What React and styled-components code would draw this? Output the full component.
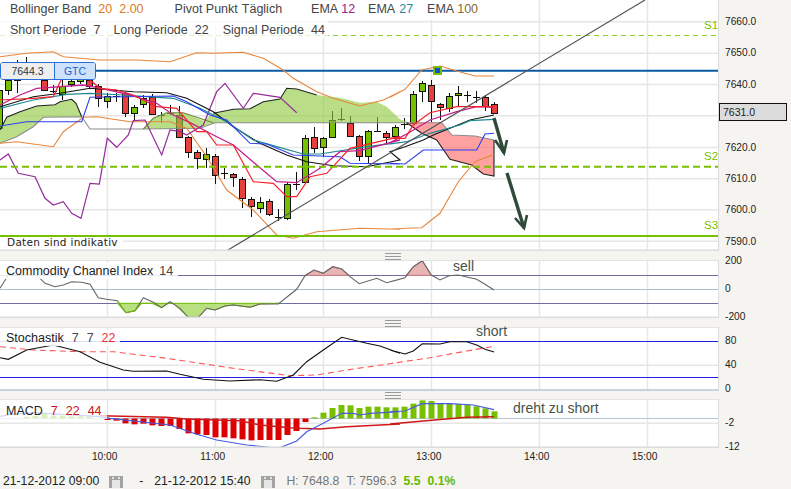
import React from "react";
import styled, { createGlobalStyle } from "styled-components";

const GlobalStyle = createGlobalStyle`
  html, body {
    margin: 0;
    padding: 0;
    background: #f5f4f0;
    overflow: hidden;
  }
`;

// zoom-read points are 3x, a pane keeps page coordinates in its viewBox
const pts = (list, ox = 0, oy = 0) =>
  list.map(([x, y]) => `${(ox + x / 3).toFixed(1)},${(oy + y / 3).toFixed(1)}`).join(" ");

const candleX = (i) => -0.5 + 9 * i;
const UP = "#76c000";
const DOWN = "#e8403a";

// i, colour, body top, body bottom, wick top, wick bottom
const candles = [
  [0, UP, 90, 128, 85, 132], [1, UP, 80, 90, 70, 95], [2, UP, 80, 80, 60, 93], [3, UP, 70, 70, 57, 75],
  [5, DOWN, 80, 90, 75, 91], [6, "#111", 91, 91, 85, 93], [7, UP, 86, 94, 80, 100], [8, UP, 81, 84, 80, 87],
  [9, UP, 79, 81, 75, 84], [10, DOWN, 80, 86, 75, 88], [11, DOWN, 86, 98, 84, 107], [12, UP, 96, 101, 93, 108],
  [13, "#111", 96, 96, 93, 102], [14, DOWN, 93, 113, 92, 117], [15, UP, 107, 113, 105, 120], [16, UP, 98, 104, 95, 108],
  [17, DOWN, 97, 114, 94, 115], [18, "#111", 115, 115, 112, 123], [19, "#111", 113, 113, 105, 115], [20, DOWN, 115, 137, 106, 138],
  [21, DOWN, 137, 152, 136, 158], [22, DOWN, 152, 158, 150, 169], [23, UP, 154, 159, 148, 168], [24, DOWN, 156, 175, 154, 184],
  [25, "#111", 173, 173, 168, 179], [26, DOWN, 174, 177, 173, 187], [27, DOWN, 179, 198, 177, 208], [28, DOWN, 199, 206, 197, 217],
  [29, UP, 202, 208, 197, 213], [30, DOWN, 201, 214, 199, 216], [31, "#111", 217, 217, 209, 221], [32, UP, 184, 218, 182, 220],
  [33, "#111", 184, 184, 172, 190], [34, UP, 138, 182, 135, 182], [35, DOWN, 137, 148, 127, 153], [36, UP, 138, 147, 137, 157],
  [37, UP, 120, 137, 111, 138], [38, "#111", 119, 119, 108, 121], [39, DOWN, 123, 136, 116, 137], [40, DOWN, 136, 156, 135, 161],
  [41, UP, 131, 156, 130, 163], [42, "#111", 131, 131, 117, 132], [43, DOWN, 133, 137, 131, 144], [44, UP, 127, 136, 125, 137],
  [45, "#111", 124, 124, 118, 129], [46, UP, 94, 123, 91, 123], [47, UP, 83, 91, 81, 102], [48, DOWN, 85, 101, 80, 122],
  [49, DOWN, 104, 107, 103, 120], [50, UP, 96, 108, 93, 112], [51, UP, 93, 95, 86, 107], [52, "#111", 95, 95, 91, 102],
  [53, "#111", 97, 97, 91, 103], [54, DOWN, 97, 106, 95, 111], [55, DOWN, 104, 113, 102, 114],
];

const priceLines = [
  { color: "#e8863a", width: 1.1, d: pts([[0, 170], [80, 160], [160, 155], [190, 170], [300, 180], [410, 180], [510, 185], [590, 158], [640, 160], [730, 157], [790, 175], [850, 210], [880, 235], [950, 275], [1000, 295], [1080, 318], [1150, 300], [1200, 275]]) + " " + pts([[0, 292], [45, 268], [95, 210], [150, 198], [200, 213], [255, 228], [312, 228]], 390) },
  { color: "#e8863a", width: 1.1, d: pts([[0, 430], [50, 425], [160, 440], [190, 395], [250, 352], [290, 350], [390, 365], [510, 365], [560, 385], [620, 470], [680, 570], [760, 630], [830, 705], [880, 715], [950, 695], [1080, 685], [1200, 688]]) + " " + pts([[0, 688], [50, 685], [95, 683], [150, 640], [205, 545], [255, 485], [312, 463]], 390) },
  { color: "#942c9a", width: 1.2, d: pts([[0, 480], [25, 462], [55, 520], [105, 530], [135, 595], [160, 615], [190, 605], [215, 640], [243, 655], [270, 550], [298, 552], [322, 415], [350, 442], [385, 405], [400, 362], [435, 360], [485, 465], [510, 390], [540, 395], [560, 405], [610, 375], [650, 275], [675, 250], [730, 325], [760, 280], [840, 292], [890, 338]]) },
  { color: "#111", width: 1.1, d: pts([[0, 320], [100, 290], [180, 280], [270, 265], [400, 275], [500, 278], [560, 295], [640, 335], [700, 380], [780, 430], [860, 465], [920, 485], [1000, 497], [1100, 500], [1200, 480]]) + " " + pts([[0, 455], [45, 440], [100, 420], [130, 405], [180, 385], [240, 360], [312, 345]], 390) },
  { color: "#1f8a96", width: 1.2, d: pts([[0, 325], [100, 300], [200, 283], [270, 280], [370, 285], [440, 290], [520, 295], [600, 325], [680, 365], [760, 420], [830, 440], [910, 462], [960, 462], [1100, 440], [1200, 428]]) + " " + pts([[0, 432], [50, 425], [120, 400], [210, 375], [240, 362], [312, 358]], 390) },
  { color: "#2a3ff0", width: 1.1, d: pts([[0, 378], [80, 365], [245, 365], [270, 292], [520, 288], [560, 305], [630, 345], [680, 360], [750, 430], [800, 432], [880, 465], [1020, 470], [1050, 490], [1200, 492]]) + " " + pts([[0, 490], [45, 492], [100, 450], [260, 450], [285, 402], [312, 400]], 390) },
  { color: "#c2208f", width: 1.3, d: pts([[0, 315], [60, 285], [110, 265], [250, 255], [290, 262], [380, 282], [470, 310], [520, 345], [570, 368], [640, 405], [700, 435], [770, 495], [830, 545], [890, 548], [960, 505], [1020, 455], [1080, 452], [1200, 420]]) + " " + pts([[0, 428], [50, 402], [120, 360], [200, 335], [260, 320], [312, 322]], 390) },
  { color: "#f5202a", width: 1.2, d: pts([[0, 300], [100, 295], [160, 290], [190, 225], [270, 240], [300, 265], [350, 270], [400, 285], [470, 320], [530, 325], [590, 395], [620, 395], [650, 435], [700, 435], [760, 545], [820, 550], [860, 590], [890, 590], [930, 530], [980, 520], [1050, 445], [1200, 410]]) + " " + pts([[0, 415], [45, 415], [70, 375], [120, 338], [200, 320], [312, 320]], 390) },
];

const greenCloudLeft = [[0, 390], [20, 352], [60, 335], [110, 318], [165, 314], [180, 305], [215, 298], [228, 310], [245, 350], [130, 352], [100, 380], [50, 410], [0, 430]];
const greenCloudRight = [[430, 387], [460, 355], [500, 338], [550, 338], [610, 362], [640, 340], [700, 328], [750, 326], [790, 305], [840, 297], [860, 265], [890, 267], [950, 285], [1020, 293], [1080, 308], [1130, 305], [1160, 320], [1200, 358], [1230, 368], [640, 368], [600, 385]];
const redCloud = [[50, 368], [155, 368], [185, 405], [255, 408], [312, 420], [312, 528], [280, 522], [245, 495], [180, 478], [140, 420], [95, 400]];

const cciCurve = pts([[0, 130], [25, 90], [110, 90], [135, 115], [165, 125], [190, 120], [215, 110], [245, 112], [270, 118], [295, 158], [320, 163], [352, 167], [378, 203], [405, 197], [430, 158], [460, 172], [485, 188], [510, 170], [540, 190], [565, 217], [595, 217], [620, 190], [645, 195], [675, 183], [700, 180], [750, 187], [780, 177], [835, 177], [890, 133], [915, 92], [942, 75], [970, 85], [998, 65], [1025, 72], [1050, 95], [1078, 116], [1130, 100], [1160, 113], [1200, 103]], 0, 245) + " " + pts([[0, 110], [45, 98], [70, 65], [97, 47], [124, 90], [150, 105], [178, 92], [205, 90], [260, 103], [285, 118], [312, 135]], 390, 245);
const cciGreen = pts([[352, 175], [378, 203], [405, 197], [425, 175]], 0, 245) + " " + pts([[455, 175], [485, 188], [505, 175], [520, 175], [565, 217], [595, 217], [620, 190], [645, 195], [675, 183], [700, 180], [750, 187], [780, 177], [838, 175]], 0, 245);
const cciRedA = pts([[915, 91], [942, 75], [970, 85], [998, 65], [1025, 72], [1048, 91]], 0, 245);
const cciRedB = pts([[48, 91], [70, 65], [97, 47], [124, 91]], 390, 245);

const stochLine = pts([[0, 338], [25, 343], [80, 315], [160, 300], [240, 320], [300, 352], [370, 375], [400, 379], [500, 378], [540, 388], [610, 403], [690, 408], [780, 404], [830, 409], [880, 390], [920, 350], [970, 315], [1025, 277], [1100, 295], [1140, 303], [1200, 325]], 0, 245) + " " + pts([[0, 315], [45, 327], [70, 318], [97, 296], [150, 297], [180, 290], [230, 290], [260, 300], [285, 313], [312, 321]], 390, 245);
const stochSignal = pts([[0, 305], [100, 315], [240, 320], [340, 320], [500, 340], [700, 370], [870, 392], [950, 390], [1060, 372], [1200, 352]], 0, 245) + " " + pts([[0, 356], [120, 338], [230, 318], [305, 305]], 390, 245);

const macdBars = [
  [3, 515], [4, 512], [5, 505], [6, 512], [7, 512], [8, 514], [9, 514], [10, 514],
  [12, 525], [13, 527], [14, 535], [15, 538], [16, 536], [17, 541], [18, 543], [19, 543], [20, 552], [21, 565], [22, 568], [23, 570], [24, 577], [25, 577], [26, 580], [27, 583], [28, 586], [29, 585], [30, 585], [31, 585], [32, 570], [33, 558], [34, 531],
  [35, 517], [36, 503], [37, 489], [38, 480], [39, 481], [40, 489], [41, 485], [42, 485], [43, 487], [44, 487], [45, 485], [46, 476], [47, 466], [48, 468], [49, 475], [50, 475], [51, 477], [52, 479], [53, 484], [54, 490], [55, 499],
];
const macdBlue = pts([[0, 515], [30, 508], [100, 503], [300, 515], [330, 520], [510, 540], [590, 568], [650, 585], [740, 600], [835, 610], [890, 588], [920, 560], [970, 535], [1025, 505], [1060, 505], [1080, 510], [1110, 505], [1200, 500]], 0, 245) + " " + pts([[0, 500], [45, 498], [97, 476], [180, 476], [250, 480], [312, 494]], 390, 245);
const macdRed = pts([[300, 512], [500, 517], [560, 522], [720, 527], [780, 540], [870, 548], [900, 550], [960, 552], [1040, 545], [1200, 537]], 0, 245) + " " + pts([[0, 537], [100, 528], [230, 517], [312, 515]], 390, 245);

const HOURS = [107.5, 215.5, 323.5, 431.5, 539.5, 647.5];

const Page = styled.div`
  width: 791px;
  height: 489px;
  display: flex;
  flex-direction: column;
  background: #f5f4f0;
  font-family: "Liberation Sans", Arial, sans-serif;
  overflow: hidden;
`;

const Pane = styled.section`
  display: flex;
  height: ${(p) => p.$height}px;
  flex: none;
`;

const Plot = styled.div`
  position: relative;
  width: 719px;
  flex: none;
  background: #fff;
  border-right: 1px solid #dcdcdc;
  box-sizing: border-box;
  box-shadow: 0 -1px 0 #e2e2e2;
  & > svg {
    display: block;
  }
`;

const Axis = styled.div`
  position: relative;
  flex: 1;
  display: flex;
  flex-direction: column;
  padding-left: 6px;
  & > div:first-child {
    margin-top: ${(p) => p.$top}px;
  }
`;

const Tick = styled.div`
  height: ${(p) => p.$step}px;
  line-height: ${(p) => p.$step}px;
  font-size: 10.2px;
  color: #222;
  flex: none;
`;

const PriceBadge = styled.div`
  position: absolute;
  left: 0;
  top: 103px;
  width: 68px;
  height: 18px;
  box-sizing: border-box;
  border: 1px solid #111;
  background: #dcdcdc;
  font-size: 10.5px;
  line-height: 17px;
  padding-left: 3px;
  color: #222;
`;

const Splitter = styled.div`
  height: ${(p) => p.$height}px;
  flex: none;
  width: 719px;
  display: flex;
  justify-content: center;
  align-items: flex-end;
  padding: 0 0 1px 66px;
  box-sizing: border-box;
`;

const Grip = styled.div`
  width: 16px;
  height: 5px;
  border-top: 1px solid #999;
  border-bottom: 1px solid #999;
  position: relative;
  &::after {
    content: "";
    position: absolute;
    left: 0;
    right: 0;
    top: 2px;
    height: 1px;
    background: #999;
  }
`;

const Legend = styled.div`
  position: absolute;
  left: 0;
  top: 0;
  display: flex;
  flex-direction: column;
  align-items: flex-start;
`;

const LegendRow = styled.div`
  display: flex;
  align-items: flex-end;
  height: ${(p) => p.$height}px;
  width: ${(p) => p.$width}px;
  box-sizing: border-box;
  padding: 0 0 ${(p) => p.$bottom}px 10px;
  background: rgba(255, 255, 255, ${(p) => p.$alpha});
  font-size: 12.5px;
  line-height: 15px;
  color: #444;
  white-space: nowrap;
`;

const Label = styled.span`
  margin-left: ${(p) => p.$gap || 0}px;
`;

const Value = styled.span`
  margin-left: ${(p) => p.$gap || 7}px;
  color: ${(p) => p.$color || "#444"};
`;

const PaneLegend = styled.div`
  position: absolute;
  left: 0;
  top: ${(p) => p.$top || 0}px;
  display: flex;
  align-items: center;
  height: 16px;
  padding: 0 5px 0 6px;
  background: rgba(255, 255, 255, ${(p) => p.$alpha || 0.85});
  font-size: 12.5px;
  color: #222;
  white-space: nowrap;
`;

const PriceTag = styled.div`
  position: absolute;
  left: 0;
  top: 62px;
  display: flex;
  width: 96px;
  height: 18px;
  box-sizing: border-box;
  border: 1px solid #2a6fd8;
  border-radius: 3px;
  overflow: hidden;
  font-size: 10.5px;
  line-height: 16px;
  text-align: center;
`;

const TagPrice = styled.span`
  width: 53px;
  background: #eeeeee;
  color: #333;
  border-right: 1px solid #2a6fd8;
`;

const TagKind = styled.span`
  flex: 1;
  background: #cfe2fb;
  color: #1a5fd0;
`;

const Disclaimer = styled.div`
  position: absolute;
  left: 0;
  bottom: 3px;
  height: 11px;
  padding: 0 5px 0 7px;
  background: #fff;
  font-family: "DejaVu Sans", Verdana, sans-serif;
  font-size: 10.5px;
  line-height: 10px;
  letter-spacing: 0.3px;
  color: #222;
`;

const Note = styled.div`
  position: absolute;
  left: ${(p) => p.$left}px;
  top: ${(p) => p.$top}px;
  font-size: 14px;
  line-height: 16px;
  color: #44544a;
`;

const LevelTag = styled.div`
  position: absolute;
  left: 704px;
  top: ${(p) => p.$top}px;
  font-size: 11.5px;
  line-height: 14px;
  color: #7ac100;
`;

const TimeAxis = styled.div`
  display: flex;
  flex: none;
  height: 20px;
  padding-left: 50.7px;
`;

const TimeLabel = styled.span`
  width: 108px;
  flex: none;
  text-align: center;
  font-size: 10.2px;
  line-height: 18px;
  color: #222;
`;

const Footer = styled.footer`
  display: flex;
  align-items: flex-end;
  flex: none;
  height: 20px;
  padding-left: 3px;
  font-size: 12.2px;
  line-height: 13px;
  color: #222;
  white-space: nowrap;
`;

const Stat = styled.span`
  margin-left: ${(p) => p.$gap || 0}px;
  color: ${(p) => p.$color || "#222"};
  font-weight: ${(p) => (p.$bold ? 700 : 400)};
`;

const CalendarSvg = styled.svg`
  flex: none;
  display: block;
  margin-left: 10px;
`;

const CalendarIcon = () => (
  <CalendarSvg width="14" height="12" viewBox="0 0 14 12">
    <rect width="14" height="12" fill="#a2a2a2" />
    <rect x="3" y="4" width="8" height="8" fill="#e6e6e6" />
    <rect x="3" y="1" width="2" height="2" fill="#e6e6e6" />
    <rect x="9" y="1" width="2" height="2" fill="#e6e6e6" />
  </CalendarSvg>
);

const Grid = ({ rows, top, bottom }) => (
  <g stroke="#e6e6e6" strokeWidth="1.4" fill="none">
    {HOURS.map((x) => (
      <line key={x} x1={x} x2={x} y1={top} y2={bottom} />
    ))}
    {rows.map((y) => (
      <line key={y} x1={0} x2={719} y1={y} y2={y} />
    ))}
  </g>
);

const MainChart = () => (
  <svg width="718" height="251" viewBox="0 0 718 251">
    <Grid rows={[21.7, 53.3, 84.5, 115.7, 147.5, 178.7, 209.7, 241.3]} top={0} bottom={250} />
    <line x1="95" x2="719" y1="70.7" y2="70.7" stroke="#0a5aa5" strokeWidth="2" />
    {candles.map(([i, color, top, bottom, wickTop, wickBottom]) => {
      const x = candleX(i);
      return (
        <g key={i}>
          <line x1={x} x2={x} y1={wickTop} y2={wickBottom} stroke="#111" />
          {top === bottom ? (
            <line x1={x - 3.5} x2={x + 3.5} y1={top + 0.5} y2={top + 0.5} stroke="#111" />
          ) : (
            <rect x={x - 3} y={top + 0.5} width="6" height={bottom - top} fill={color} stroke="#111" strokeWidth="1" />
          )}
        </g>
      );
    })}
    <polygon points={pts(greenCloudLeft)} fill="#8fca3f" fillOpacity="0.62" />
    <polygon points={pts(greenCloudRight)} fill="#8fca3f" fillOpacity="0.62" />
    <polygon points={pts(redCloud, 390)} fill="#ff6f6f" fillOpacity="0.65" />
    <polyline points={pts([[0, 430], [50, 410], [100, 380], [130, 352], [245, 350], [270, 387], [430, 387], [600, 385], [645, 368], [1200, 368]]) + " " + pts([[0, 368], [155, 368], [185, 405], [255, 408], [312, 420]], 390)} fill="none" stroke="#8c8c8c" strokeWidth="1.1" />
    <polyline points={pts([[0, 390], [20, 352], [60, 335], [110, 318], [165, 314], [180, 305], [215, 298], [228, 310], [245, 350]])} fill="none" stroke="#222" strokeWidth="1.1" />
    <polyline points={pts([[640, 340], [700, 328], [750, 326], [790, 305], [840, 297], [860, 265], [890, 267], [950, 285]])} fill="none" stroke="#222" strokeWidth="1.1" />
    <polyline points={pts([[430, 387], [460, 355], [500, 338], [550, 338], [640, 368]])} fill="none" stroke="#6d8a3a" strokeWidth="1.1" />
    <polyline points={pts([[50, 368], [95, 400], [140, 420], [180, 478], [245, 495], [280, 522], [312, 528], [312, 420]], 390)} fill="none" stroke="#222" strokeWidth="1.1" />
    {priceLines.map((line, i) => (
      <polyline key={i} points={line.d} fill="none" stroke={line.color} strokeWidth={line.width} />
    ))}
    <line x1="0" x2="719" y1="35.5" y2="35.5" stroke="#8ccb2a" strokeDasharray="5 4" />
    <line x1="0" x2="719" y1="166.8" y2="166.8" stroke="#76c000" strokeWidth="2" strokeDasharray="7 4" />
    <line x1="0" x2="719" y1="236" y2="236" stroke="#76c000" strokeWidth="2" />
    <line x1="228" y1="250" x2="645" y2="0" stroke="#555" strokeWidth="1.2" />
    <rect x="433" y="66" width="9" height="9" fill="#76c000" />
    <rect x="435" y="68" width="5" height="5" fill="#1050d0" />
    <g fill="none" stroke="#2f4a38" strokeWidth="3.4">
      <polyline points="494,118 504,153" />
      <polyline points="495,140 504,153 507,140" strokeWidth="2.6" />
      <polyline points="507,173 524,228" />
      <polyline points="515,218 524,228 527,215" strokeWidth="2.6" />
    </g>
    <rect x="0" y="249.5" width="719" height="1.5" fill="#dcdcdc" />
  </svg>
);

const CciChart = () => (
  <svg width="718" height="57" viewBox="0 261 718 57">
    <Grid rows={[]} top={261} bottom={318} />
    <line x1="0" x2="719" y1="289.5" y2="289.5" stroke="#a8bfd4" />
    <line x1="0" x2="719" y1="275.5" y2="275.5" stroke="#6f6f9f" />
    <line x1="0" x2="719" y1="303.5" y2="303.5" stroke="#6f6f9f" />
    <polygon points={cciGreen} fill="#b9e07e" stroke="#76c000" />
    <polygon points={cciRedA} fill="#e8b4b4" stroke="#d88080" />
    <polygon points={cciRedB} fill="#e8b4b4" stroke="#d88080" />
    <polyline points={cciCurve} fill="none" stroke="#666" strokeWidth="1.1" />
    <polyline points={pts([[352, 167], [378, 203], [405, 197], [425, 175]], 0, 245)} fill="none" stroke="#76c000" />
    <rect x="0" y="316.5" width="719" height="1.5" fill="#dcdcdc" />
  </svg>
);

const StochChart = () => (
  <svg width="718" height="63" viewBox="0 328 718 63">
    <Grid rows={[365.3]} top={328} bottom={391} />
    <line x1="0" x2="719" y1="341.5" y2="341.5" stroke="#2020e0" />
    <line x1="0" x2="719" y1="377.5" y2="377.5" stroke="#2020e0" />
    <line x1="0" x2="719" y1="390" y2="390" stroke="#b4c6d6" strokeWidth="1.4" />
    <polyline points={stochSignal} fill="none" stroke="#f55" strokeWidth="1.1" strokeDasharray="6 4" />
    <polyline points={stochLine} fill="none" stroke="#111" strokeWidth="1.1" />
  </svg>
);

const MacdChart = () => (
  <svg width="718" height="48" viewBox="0 400 718 48">
    <Grid rows={[423.3]} top={400} bottom={448} />
    <line x1="0" x2="719" y1="418.5" y2="418.5" stroke="#b4c6d6" />
    {macdBars.map(([i, y]) => {
      const end = 245 + y / 3;
      const base = 418.5;
      return (
        <rect
          key={i}
          x={candleX(i) - 3}
          width="6"
          y={Math.min(end, base)}
          height={Math.abs(end - base)}
          fill={end > base ? "#dc0000" : "#76c000"}
        />
      );
    })}
    <polyline points={macdRed} fill="none" stroke="#d01818" strokeWidth="1.4" />
    <polyline points={macdBlue} fill="none" stroke="#4a5ae0" strokeWidth="1.2" />
    <rect x="0" y="446.5" width="719" height="1.5" fill="#dcdcdc" />
  </svg>
);

const MAIN_TICKS = ["7660.0", "7650.0", "7640.0", "", "7620.0", "7610.0", "7600.0", "7590.0"];

export default function App() {
  return (
    <Page>
      <GlobalStyle />
      <Pane $height={251}>
        <Plot>
          <MainChart />
          <Legend>
            <LegendRow $height={20} $width={484} $bottom={3} $alpha={1}>
              <Label>Bollinger Band</Label>
              <Value $color="#e07a20">20</Value>
              <Value $color="#e07a20">2.00</Value>
              <Label $gap={31}>Pivot Punkt</Label>
              <Label $gap={4}>Täglich</Label>
              <Label $gap={29}>EMA</Label>
              <Value $gap={3} $color="#a0208a">12</Value>
              <Label $gap={13}>EMA</Label>
              <Value $gap={4} $color="#1f8a96">27</Value>
              <Label $gap={14}>EMA</Label>
              <Value $gap={3} $color="#8a6a30">100</Value>
            </LegendRow>
            <LegendRow $height={18} $width={328} $bottom={0} $alpha={0.75}>
              <Label>Short Periode</Label>
              <Value>7</Value>
              <Label $gap={13}>Long Periode</Label>
              <Value>22</Value>
              <Label $gap={14}>Signal Periode</Label>
              <Value>44</Value>
            </LegendRow>
          </Legend>
          <PriceTag>
            <TagPrice>7644.3</TagPrice>
            <TagKind>GTC</TagKind>
          </PriceTag>
          <LevelTag $top={18}>S1</LevelTag>
          <LevelTag $top={149}>S2</LevelTag>
          <LevelTag $top={218}>S3</LevelTag>
          <Disclaimer>Daten sind indikativ</Disclaimer>
        </Plot>
        <Axis $top={6}>
          {MAIN_TICKS.map((t, i) => (
            <Tick key={i} $step={31.4}>{t}</Tick>
          ))}
          <PriceBadge>7631.0</PriceBadge>
        </Axis>
      </Pane>
      <Splitter $height={10}><Grip /></Splitter>
      <Pane $height={57}>
        <Plot>
          <CciChart />
          <PaneLegend $top={2}>
            Commodity Channel Index<Value $gap={6}>14</Value>
          </PaneLegend>
          <Note $left={453} $top={-3}>sell</Note>
        </Plot>
        <Axis $top={-14}>
          {["200", "0", "-200"].map((t) => (
            <Tick key={t} $step={28}>{t}</Tick>
          ))}
        </Axis>
      </Pane>
      <Splitter $height={10}><Grip /></Splitter>
      <Pane $height={63}>
        <Plot>
          <StochChart />
          <PaneLegend $top={2}>
            Stochastik<Value $gap={8}>7</Value><Value $gap={8}>7</Value><Value $gap={8} $color="#f03030">22</Value>
          </PaneLegend>
          <Note $left={476} $top={-5}>short</Note>
        </Plot>
        <Axis $top={1}>
          {["80", "40", "0"].map((t) => (
            <Tick key={t} $step={24}>{t}</Tick>
          ))}
        </Axis>
      </Pane>
      <Splitter $height={9}><Grip /></Splitter>
      <Pane $height={48}>
        <Plot>
          <MacdChart />
          <PaneLegend $top={3} $alpha={0.75}>
            MACD<Value $gap={8} $color="#d01010">7</Value><Value $gap={8} $color="#d01010">22</Value><Value $gap={8} $color="#d01010">44</Value>
          </PaneLegend>
          <Note $left={513} $top={0}>dreht zu short</Note>
        </Plot>
        <Axis $top={11}>
          {["-2", "-12"].map((t) => (
            <Tick key={t} $step={24}>{t}</Tick>
          ))}
        </Axis>
      </Pane>
      <TimeAxis>
        {["10:00", "11:00", "12:00", "13:00", "14:00", "15:00"].map((t) => (
          <TimeLabel key={t}>{t}</TimeLabel>
        ))}
      </TimeAxis>
      <Footer>
        <Stat>21-12-2012 09:00</Stat>
        <CalendarIcon />
        <Stat $gap={16}>-</Stat>
        <Stat $gap={11}>21-12-2012 15:40</Stat>
        <CalendarIcon />
        <Stat $gap={12} $color="#777">H: 7648.8</Stat>
        <Stat $gap={7} $color="#777">T: 7596.3</Stat>
        <Stat $gap={7} $color="#66b800" $bold>5.5</Stat>
        <Stat $gap={7} $color="#66b800" $bold>0.1%</Stat>
      </Footer>
    </Page>
  );
}
